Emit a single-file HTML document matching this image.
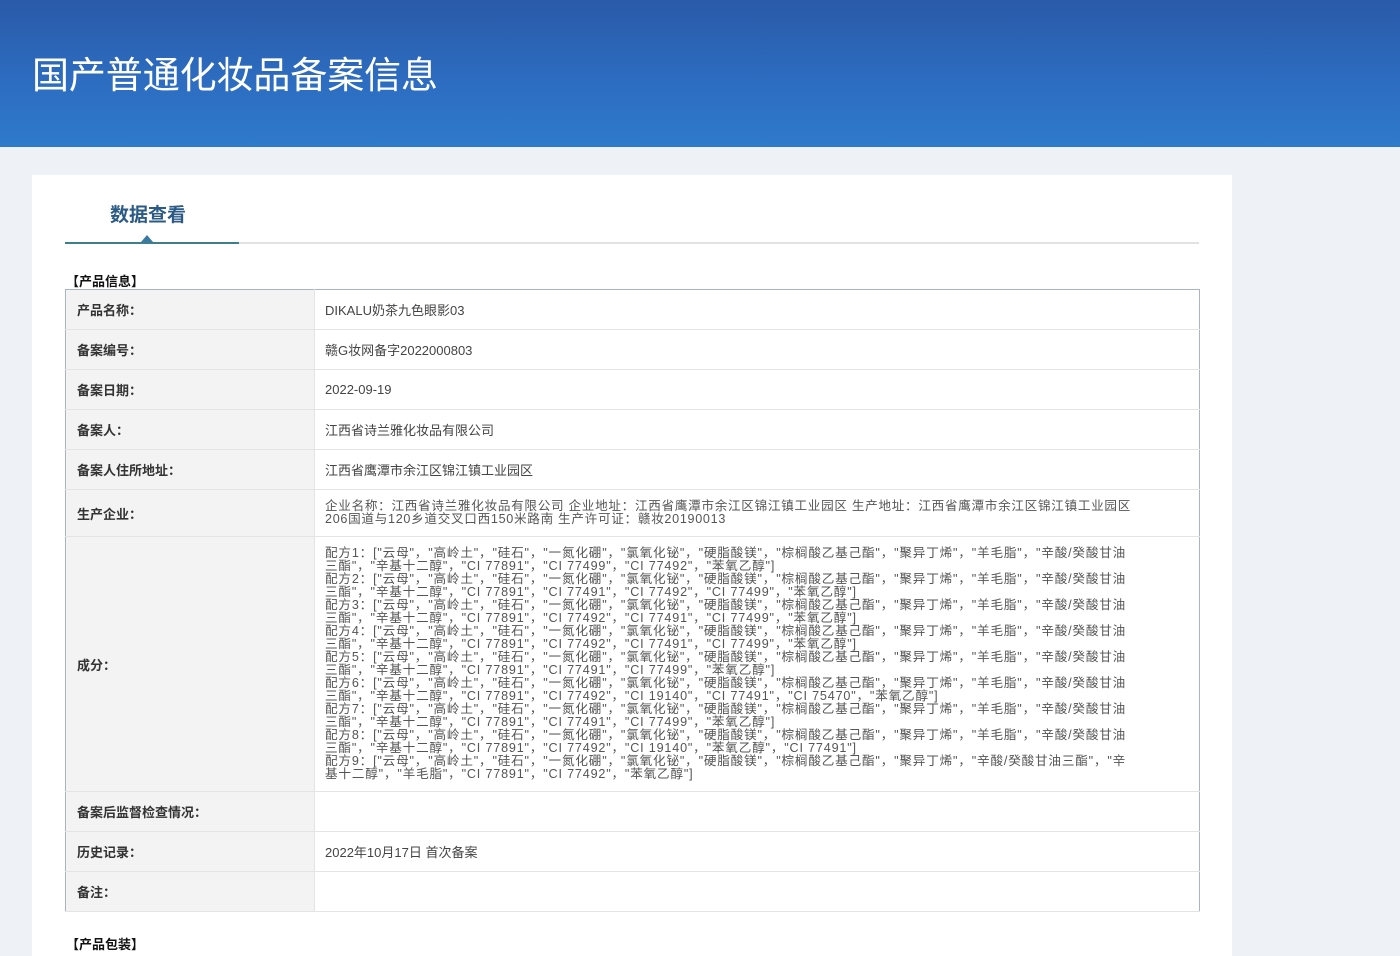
<!DOCTYPE html>
<html><head><meta charset="utf-8"><style>
*{margin:0;padding:0;box-sizing:border-box}
html,body{width:1400px;height:956px;overflow:hidden}
body{background:#eef2f6;font-family:"Liberation Sans","Noto Sans CJK SC",sans-serif;position:relative}
.hdr{position:absolute;left:0;top:0;width:1400px;height:147px;background:linear-gradient(180deg,#2a5aa8 0%,#2d6ec2 60%,#2f7acb 100%)}
.hdr h1{position:absolute;left:32px;top:45px;font-size:37px;font-weight:normal;color:#fff;letter-spacing:-0.1px}
.card{position:absolute;left:32px;top:175px;width:1200px;height:800px;background:#fff}
.tab{position:absolute;left:78px;top:25px;font-size:19px;font-weight:bold;color:#2b5a84}
.line{position:absolute;left:33px;top:67px;width:1134px;height:2px;background:#e2e2e2}
.act{position:absolute;left:33px;top:67px;width:174px;height:2px;background:#3d7f8a}
.tri{position:absolute;left:109px;top:60px;width:0;height:0;border-left:6px solid transparent;border-right:6px solid transparent;border-bottom:7px solid #3a7aa0}
.sec{position:absolute;left:34px;font-size:13px;font-weight:bold;color:#111}
table{position:absolute;left:33px;top:114px;width:1135px;border-collapse:collapse;border:1px solid #a9b4c6;font-size:13px;color:#444}
td{border-bottom:1px solid #e4e4e4;vertical-align:middle}
td.l{width:249px;background:#f3f3f3;font-weight:bold;color:#333;padding-left:11px;border-right:1px solid #e4e4e4}
td.v{padding-left:10px}
.ing{font-size:12.6px;line-height:13px;white-space:nowrap;color:#555;letter-spacing:0.82px}
.pro{letter-spacing:0.7px}
</style></head><body>
<div class="hdr"><h1>国产普通化妆品备案信息</h1></div>
<div class="card">
<div class="tab">数据查看</div>
<div class="line"></div><div class="act"></div><div class="tri"></div>
<div class="sec" style="top:96px">【产品信息】</div>
<table>
<tr style="height:40px"><td class="l">产品名称：</td><td class="v">DIKALU奶茶九色眼影03</td></tr>
<tr style="height:40px"><td class="l">备案编号：</td><td class="v">赣G妆网备字2022000803</td></tr>
<tr style="height:40px"><td class="l">备案日期：</td><td class="v">2022-09-19</td></tr>
<tr style="height:40px"><td class="l">备案人：</td><td class="v">江西省诗兰雅化妆品有限公司</td></tr>
<tr style="height:40px"><td class="l">备案人住所地址：</td><td class="v">江西省鹰潭市余江区锦江镇工业园区</td></tr>
<tr style="height:47px"><td class="l">生产企业：</td><td class="v ing pro">企业名称：江西省诗兰雅化妆品有限公司 企业地址：江西省鹰潭市余江区锦江镇工业园区 生产地址：江西省鹰潭市余江区锦江镇工业园区<br>206国道与120乡道交叉口西150米路南 生产许可证：赣妆20190013</td></tr>
<tr style="height:255px"><td class="l">成分：</td><td class="v ing">配方1：["云母"，"高岭土"，"硅石"，"一氮化硼"，"氯氧化铋"，"硬脂酸镁"，"棕榈酸乙基己酯"，"聚异丁烯"，"羊毛脂"，"辛酸/癸酸甘油<br>三酯"，"辛基十二醇"，"CI 77891"，"CI 77499"，"CI 77492"，"苯氧乙醇"]<br>配方2：["云母"，"高岭土"，"硅石"，"一氮化硼"，"氯氧化铋"，"硬脂酸镁"，"棕榈酸乙基己酯"，"聚异丁烯"，"羊毛脂"，"辛酸/癸酸甘油<br>三酯"，"辛基十二醇"，"CI 77891"，"CI 77491"，"CI 77492"，"CI 77499"，"苯氧乙醇"]<br>配方3：["云母"，"高岭土"，"硅石"，"一氮化硼"，"氯氧化铋"，"硬脂酸镁"，"棕榈酸乙基己酯"，"聚异丁烯"，"羊毛脂"，"辛酸/癸酸甘油<br>三酯"，"辛基十二醇"，"CI 77891"，"CI 77492"，"CI 77491"，"CI 77499"，"苯氧乙醇"]<br>配方4：["云母"，"高岭土"，"硅石"，"一氮化硼"，"氯氧化铋"，"硬脂酸镁"，"棕榈酸乙基己酯"，"聚异丁烯"，"羊毛脂"，"辛酸/癸酸甘油<br>三酯"，"辛基十二醇"，"CI 77891"，"CI 77492"，"CI 77491"，"CI 77499"，"苯氧乙醇"]<br>配方5：["云母"，"高岭土"，"硅石"，"一氮化硼"，"氯氧化铋"，"硬脂酸镁"，"棕榈酸乙基己酯"，"聚异丁烯"，"羊毛脂"，"辛酸/癸酸甘油<br>三酯"，"辛基十二醇"，"CI 77891"，"CI 77491"，"CI 77499"，"苯氧乙醇"]<br>配方6：["云母"，"高岭土"，"硅石"，"一氮化硼"，"氯氧化铋"，"硬脂酸镁"，"棕榈酸乙基己酯"，"聚异丁烯"，"羊毛脂"，"辛酸/癸酸甘油<br>三酯"，"辛基十二醇"，"CI 77891"，"CI 77492"，"CI 19140"，"CI 77491"，"CI 75470"，"苯氧乙醇"]<br>配方7：["云母"，"高岭土"，"硅石"，"一氮化硼"，"氯氧化铋"，"硬脂酸镁"，"棕榈酸乙基己酯"，"聚异丁烯"，"羊毛脂"，"辛酸/癸酸甘油<br>三酯"，"辛基十二醇"，"CI 77891"，"CI 77491"，"CI 77499"，"苯氧乙醇"]<br>配方8：["云母"，"高岭土"，"硅石"，"一氮化硼"，"氯氧化铋"，"硬脂酸镁"，"棕榈酸乙基己酯"，"聚异丁烯"，"羊毛脂"，"辛酸/癸酸甘油<br>三酯"，"辛基十二醇"，"CI 77891"，"CI 77492"，"CI 19140"，"苯氧乙醇"，"CI 77491"]<br>配方9：["云母"，"高岭土"，"硅石"，"一氮化硼"，"氯氧化铋"，"硬脂酸镁"，"棕榈酸乙基己酯"，"聚异丁烯"，"辛酸/癸酸甘油三酯"，"辛<br>基十二醇"，"羊毛脂"，"CI 77891"，"CI 77492"，"苯氧乙醇"]</td></tr>
<tr style="height:40px"><td class="l">备案后监督检查情况：</td><td class="v"></td></tr>
<tr style="height:40px"><td class="l">历史记录：</td><td class="v">2022年10月17日 首次备案</td></tr>
<tr style="height:40px"><td class="l">备注：</td><td class="v"></td></tr>
</table>
<div class="sec" style="top:759px">【产品包装】</div>
</div>
</body></html>
